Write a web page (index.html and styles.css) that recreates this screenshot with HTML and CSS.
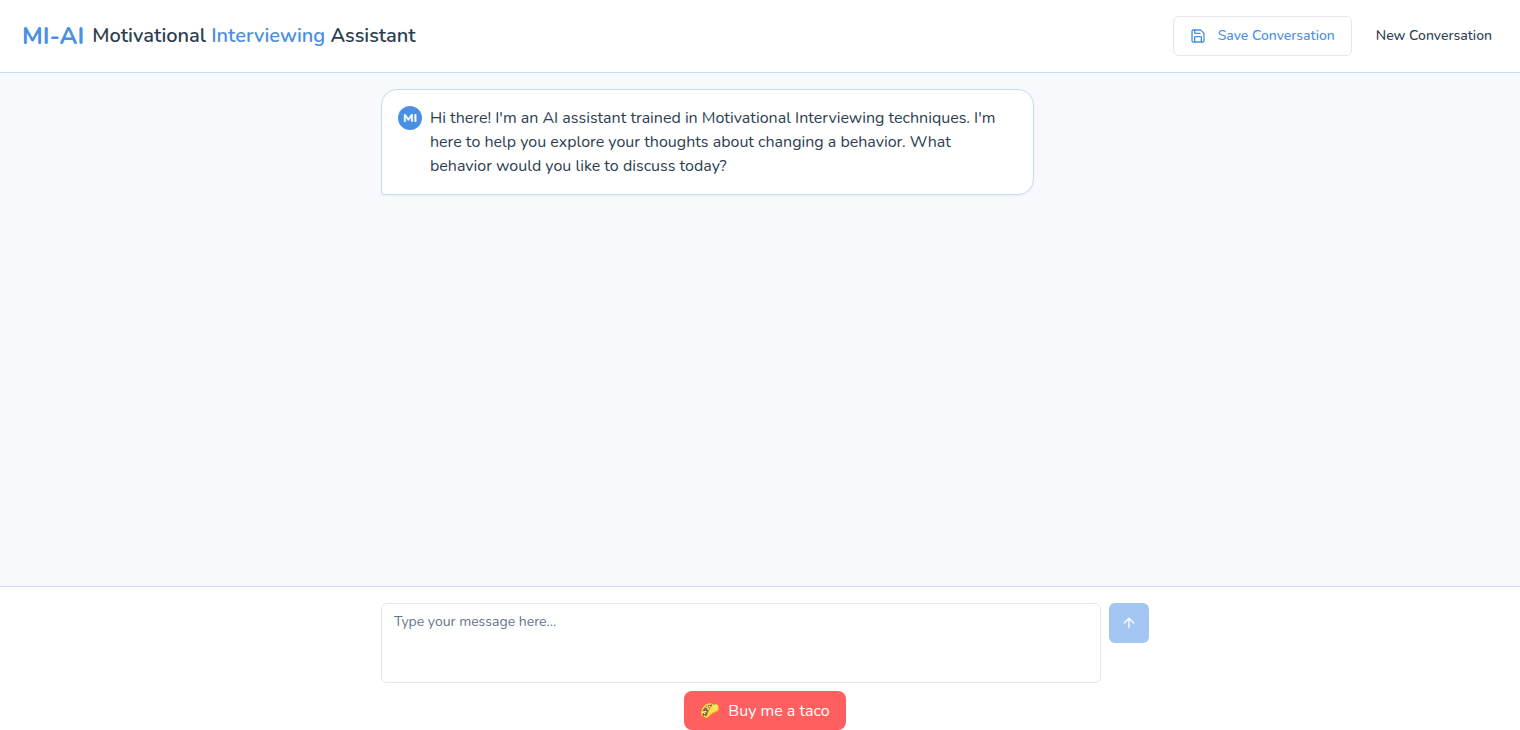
FILE: index.html
```html
<!DOCTYPE html>
<html lang="en">
<head>
<meta charset="utf-8">
<meta name="viewport" content="width=device-width, initial-scale=1">
<title>MI-AI Motivational Interviewing Assistant</title>
<link rel="stylesheet" href="styles.css">
</head>
<body class="page">
  <header class="header">
    <div class="brand">
      <span class="brand-mark">MI-AI</span>
      <h1 class="brand-title">Motivational <span class="accent">Interviewing</span> Assistant</h1>
    </div>
    <div class="actions">
      <button type="button" class="button button-outline">
        <svg class="icon" viewBox="0 0 24 24" aria-hidden="true"><path d="M15.2 3a2 2 0 0 1 1.4.6l3.8 3.8a2 2 0 0 1 .6 1.4V19a2 2 0 0 1-2 2H5a2 2 0 0 1-2-2V5a2 2 0 0 1 2-2z"/><path d="M17 21v-7a1 1 0 0 0-1-1H8a1 1 0 0 0-1 1v7"/><path d="M7 3v4a1 1 0 0 0 1 1h7"/></svg>
        Save Conversation
      </button>
      <button type="button" class="button">New Conversation</button>
    </div>
  </header>

  <main class="chat">
    <div class="column">
      <article class="message">
        <span class="avatar">MI</span>
        <p class="message-text">Hi there! I'm an AI assistant trained in Motivational Interviewing techniques. I'm here to help you explore your thoughts about changing a behavior. What behavior would you like to discuss today?</p>
      </article>
    </div>
  </main>

  <footer class="footer">
    <form class="column composer">
      <textarea class="input" aria-label="Message" placeholder="Type your message here..."></textarea>
      <button type="submit" class="send" aria-label="Send message" disabled>
        <svg class="icon" viewBox="0 0 24 24" aria-hidden="true"><path d="m5 12 7-7 7 7"/><path d="M12 19V5"/></svg>
      </button>
    </form>
    <a class="taco" href="#taco"><span>🌮</span><span>Buy me a taco</span></a>
  </footer>
</body>
</html>
```

FILE: styles.css
```css
* {
  box-sizing: border-box;
}

.page {
  display: flex;
  flex-direction: column;
  height: 100vh;
  margin: 0;
  overflow: hidden;
  background: #f8f9fd;
  color: #2c3e50;
  font-family: Nunito, "Open Sans", sans-serif;
  font-size: 16px;
  line-height: 24px;
}

.header {
  display: flex;
  align-items: center;
  justify-content: space-between;
  padding: 16px 12px 16px 22px;
  background: #fff;
  border-bottom: 1px solid #c2dff7;
}

.brand {
  display: flex;
  align-items: center;
  gap: 8px;
}

.brand-mark {
  color: #4a90e2;
  font-size: 24px;
  font-weight: 700;
}

.brand-title {
  margin: 0;
  font-size: 20px;
  font-weight: 600;
}

.accent {
  color: #4a90e2;
}

.actions {
  display: flex;
  gap: 8px;
}

.button {
  display: flex;
  align-items: center;
  gap: 12px;
  height: 40px;
  padding: 0 16px;
  border: 0;
  border-radius: 6px;
  background: #fff;
  color: #2c3e50;
  font: 500 14px/20px Nunito, "Open Sans", sans-serif;
}

.button-outline {
  border: 1px solid #e2e8f0;
  color: #4a90e2;
}

.icon {
  width: 16px;
  height: 16px;
  fill: none;
  stroke: currentColor;
  stroke-width: 2;
  stroke-linecap: round;
  stroke-linejoin: round;
}

.chat {
  flex: 1;
  min-height: 0;
  padding: 16px 0 16px 10px;
}

.column {
  width: 100%;
  max-width: 768px;
  margin: 0 auto;
}

.message {
  display: flex;
  gap: 8px;
  width: 85%;
  padding: 16px;
  background: #fff;
  border: 1px solid #c2dff7;
  border-radius: 16px 16px 16px 4px;
  box-shadow: 0 1px 2px rgb(0 0 0 / 5%);
}

.avatar {
  display: grid;
  flex: none;
  place-items: center;
  width: 24px;
  height: 24px;
  border-radius: 50%;
  background: #4a90e2;
  color: #fff;
  font-size: 12px;
  font-weight: 800;
}

.message-text {
  margin: 0;
}

.footer {
  display: flex;
  flex-direction: column;
  align-items: center;
  gap: 8px;
  padding: 16px 0 0 10px;
  background: #fff;
  border-top: 1px solid #c2dff7;
}

.composer {
  display: flex;
  gap: 8px;
}

.input {
  flex: 1;
  height: 80px;
  padding: 8px 12px;
  border: 1px solid #e2e8f0;
  border-radius: 6px;
  background: #fff;
  color: #2c3e50;
  font: 14px/20px Nunito, "Open Sans", sans-serif;
  resize: none;
}

.input::placeholder {
  color: #64748b;
}

.send {
  display: grid;
  place-items: center;
  width: 40px;
  height: 40px;
  padding: 0;
  border: 0;
  border-radius: 6px;
  background: #4a90e2;
  color: #fff;
  opacity: 0.5;
}

.taco {
  display: flex;
  gap: 8px;
  padding: 8px 16px 7px;
  border-radius: 8px;
  background: #ff5f5f;
  color: #fff;
  text-decoration: none;
}
```
